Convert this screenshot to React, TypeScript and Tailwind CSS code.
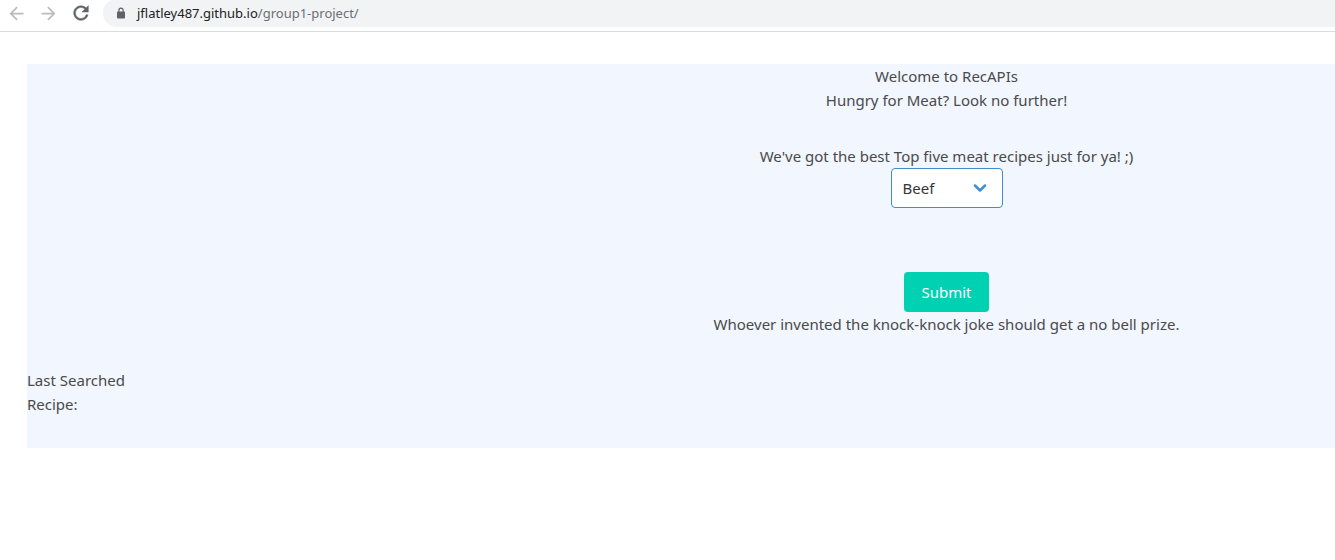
import { useState } from "react";
import { ChevronDown } from "lucide-react";
import { MdArrowBack, MdArrowForward } from "react-icons/md";

function LockIcon() {
  return (
    <svg viewBox="0 0 10 12" className="h-3 w-[10px] shrink-0 text-[#5f6368]" aria-hidden="true">
      <rect x="1" y="4.5" width="8" height="7" rx="0.8" fill="currentColor" />
      <path d="M2.9 5V3.2a2.1 2.1 0 0 1 4.2 0V5" fill="none" stroke="currentColor" strokeWidth="1.2" />
    </svg>
  );
}

function ReloadIcon() {
  return (
    <svg viewBox="0 0 24 24" className="size-[22px]" fill="currentColor" stroke="currentColor" strokeWidth="0.5" aria-hidden="true">
      <path d="M17.65 6.35A7.958 7.958 0 0 0 12 4c-4.42 0-7.99 3.58-7.99 8s3.57 8 7.99 8c3.73 0 6.84-2.55 7.73-6h-2.08A5.99 5.99 0 0 1 12 18c-3.31 0-6-2.69-6-6s2.69-6 6-6c1.66 0 3.14.69 4.22 1.78L13 11h7V4l-2.35 2.35z" />
    </svg>
  );
}

function BrowserBar() {
  return (
    <header className="flex h-8 items-start overflow-hidden border-b border-[#d9dbde] bg-white">
      <nav aria-label="Browser" className="flex h-[26px] items-center gap-[11px] pl-[6px] pr-[11px]">
        <button type="button" aria-label="Back" className="text-[#babcbe]">
          <MdArrowBack size={21} />
        </button>
        <button type="button" aria-label="Forward" className="text-[#babcbe]">
          <MdArrowForward size={21} />
        </button>
        <button type="button" aria-label="Reload" className="text-[#5f6368]">
          <ReloadIcon />
        </button>
      </nav>
      <div className="-mt-px flex h-7 flex-1 items-center gap-[11px] rounded-l-full bg-[#f1f3f4] pl-[13px]">
        <LockIcon />
        <p className="font-['Noto_Sans',sans-serif] text-[13px] leading-5 text-[#6b6f73]">
          <span className="text-[#202124]">jflatley487.github.io</span>/group1-project/
        </p>
      </div>
    </header>
  );
}

export default function App() {
  const [meat, setMeat] = useState("Beef");

  return (
    <div className="min-h-screen bg-white font-['Noto_Sans',sans-serif] text-[15px] leading-6 text-[#4a4a4a]">
      <BrowserBar />
      <main className="ml-[27px] mt-8 bg-[#f1f6ff] pb-8">
        <section className="flex flex-col items-center pl-[531px] text-center">
          <h1>Welcome to RecAPIs</h1>
          <h2>Hungry for Meat? Look no further!</h2>
          <label htmlFor="meat" className="mt-8">
            We've got the best Top five meat recipes just for ya! ;)
          </label>
          <div className="relative">
            <select
              id="meat"
              value={meat}
              onChange={(e) => setMeat(e.target.value)}
              className="h-10 w-28 appearance-none rounded border border-[#3e8ed0] bg-white pl-[11px] pr-10 text-[#363636]"
            >
              <option>Beef</option>
              <option>Chicken</option>
              <option>Pork</option>
              <option>Lamb</option>
            </select>
            <ChevronDown
              size={20}
              strokeWidth={3}
              className="pointer-events-none absolute right-[13px] top-[10px] text-[#3e8ed0]"
            />
          </div>
          <button type="button" className="mt-16 h-10 rounded bg-[#00d1b2] px-[17px] text-white">
            Submit
          </button>
          <p>Whoever invented the knock-knock joke should get a no bell prize.</p>
        </section>
        <section className="mt-8">
          <p>Last Searched</p>
          <p>Recipe:</p>
        </section>
      </main>
    </div>
  );
}
